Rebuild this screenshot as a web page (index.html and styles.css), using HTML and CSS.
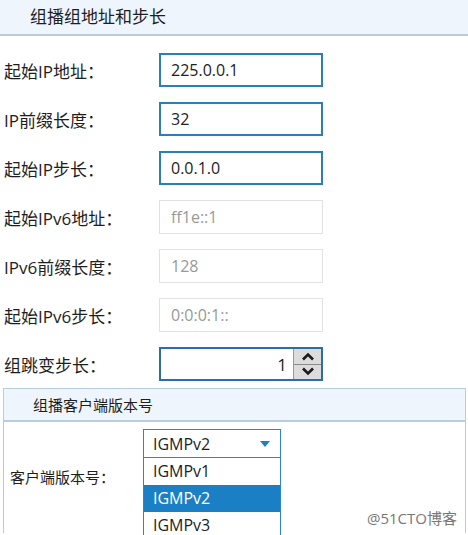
FILE: index.html
```html
<!DOCTYPE html>
<html lang="zh-CN">
<head>
    <meta charset="UTF-8">
    <title>组播组地址和步长</title>
    <link rel="stylesheet" href="styles.css">
</head>
<body>
    <div class="section-head main-head">组播组地址和步长</div>

    <div class="form">
        <div class="form-row">
            <label>起始IP地址：</label>
            <input class="field" type="text" value="225.0.0.1">
        </div>
        <div class="form-row">
            <label>IP前缀长度：</label>
            <input class="field" type="text" value="32">
        </div>
        <div class="form-row">
            <label>起始IP步长：</label>
            <input class="field" type="text" value="0.0.1.0">
        </div>
        <div class="form-row">
            <label>起始IPv6地址：</label>
            <input class="field" type="text" value="ff1e::1" disabled>
        </div>
        <div class="form-row">
            <label>IPv6前缀长度：</label>
            <input class="field" type="text" value="128" disabled>
        </div>
        <div class="form-row">
            <label>起始IPv6步长：</label>
            <input class="field" type="text" value="0:0:0:1::" disabled>
        </div>
        <div class="form-row spin-row">
            <label>组跳变步长：</label>
            <div class="spinner">
                <input class="spin-value" type="text" value="1">
                <div class="spin-buttons">
                    <span class="spin-btn">
                        <svg width="14" height="9" viewBox="0 0 14 9"><path d="M2 7.5 L7 2.5 L12 7.5" fill="none" stroke="#1a1a1a" stroke-width="2.6"/></svg>
                    </span>
                    <span class="spin-btn">
                        <svg width="14" height="9" viewBox="0 0 14 9"><path d="M2 1.5 L7 6.5 L12 1.5" fill="none" stroke="#1a1a1a" stroke-width="2.6"/></svg>
                    </span>
                </div>
            </div>
        </div>
    </div>

    <div class="client-box">
        <div class="section-head sub-head">组播客户端版本号</div>
        <div class="client-body">
            <label>客户端版本号：</label>
            <div class="combo">
                <div class="combo-box">
                    <span>IGMPv2</span>
                    <svg width="10" height="6" viewBox="0 0 10 6"><path d="M0 0 H10 L5 6 Z" fill="#1f7fc4"/></svg>
                </div>
                <ul class="combo-list">
                    <li>IGMPv1</li>
                    <li class="selected">IGMPv2</li>
                    <li>IGMPv3</li>
                </ul>
            </div>
        </div>
        <div class="watermark">@51CTO博客</div>
    </div>
</body>
</html>
```

FILE: styles.css
```css
body {
    margin: 0;
    background-color: #fff;
    font-family: "Open Sans", "Noto Sans CJK SC", sans-serif;
    color: #1e1e1e;
    width: 468px;
    height: 535px;
    overflow: hidden;
}

.section-head {
    background-color: #eef5fc;
    border-bottom: 2px solid #b9cde0;
    box-sizing: border-box;
}

.main-head {
    height: 36px;
    padding: 3px 0 0 30px;
    font-size: 17px;
}

.form {
    padding-top: 17px;
}

.form-row {
    display: flex;
    align-items: center;
    height: 34px;
    margin-bottom: 15px;
}

.form-row label {
    width: 155px;
    padding-left: 4px;
    font-size: 17px;
}

.field {
    width: 164px;
    height: 34px;
    box-sizing: border-box;
    border: 2px solid #2a7fb6;
    padding: 0 10px;
    font-family: "Open Sans", sans-serif;
    font-size: 16px;
    color: #222;
    outline: none;
}

.field:disabled {
    border: 1px solid #e2e2e2;
    background-color: #fff;
    color: #999;
    padding-left: 11px;
}

.spin-row {
    margin-top: 2px;
    margin-bottom: 0;
}

.spinner {
    display: flex;
    width: 164px;
    height: 34px;
    box-sizing: border-box;
    border: 2px solid #2a6f9f;
}

.spin-value {
    flex: 1;
    min-width: 0;
    border: none;
    border-right: 1px solid #7aa3c2;
    text-align: right;
    padding: 0 6px;
    font-family: "Open Sans", sans-serif;
    font-size: 17px;
    color: #222;
    outline: none;
}

.spin-buttons {
    display: flex;
    flex-direction: column;
    width: 27px;
    background-color: #dcdcdc;
}

.spin-btn {
    flex: 1;
    display: flex;
    align-items: center;
    justify-content: center;
}

.spin-btn + .spin-btn {
    border-top: 1px solid #8a8a8a;
}

.client-box {
    position: relative;
    margin: 7px 2px 0 3px;
    height: 145px;
    box-sizing: border-box;
    border: 1px solid #b9cde0;
    border-bottom: none;
}

.sub-head {
    height: 33px;
    padding: 5px 0 0 29px;
    font-size: 15px;
}

.client-body {
    display: flex;
    padding: 7px 0 0 6px;
}

.client-body label {
    width: 133px;
    padding-top: 37px;
    font-size: 15px;
}

.combo {
    width: 138px;
    font-family: "Open Sans", sans-serif;
    font-size: 16px;
}

.combo-box {
    display: flex;
    align-items: center;
    justify-content: space-between;
    height: 29px;
    box-sizing: border-box;
    border: 1px solid #2a86c6;
    padding: 0 10px 0 9px;
}

.combo-list {
    list-style: none;
    margin: 0;
    padding: 0;
    border: 1px solid #2a86c6;
    border-top: none;
}

.combo-list li {
    height: 27px;
    line-height: 27px;
    padding-left: 9px;
}

.combo-list li.selected {
    background-color: #1b7fc6;
    color: #fff;
}

.watermark {
    position: absolute;
    right: 8px;
    bottom: 5px;
    font-size: 15px;
    color: #777;
}
```
